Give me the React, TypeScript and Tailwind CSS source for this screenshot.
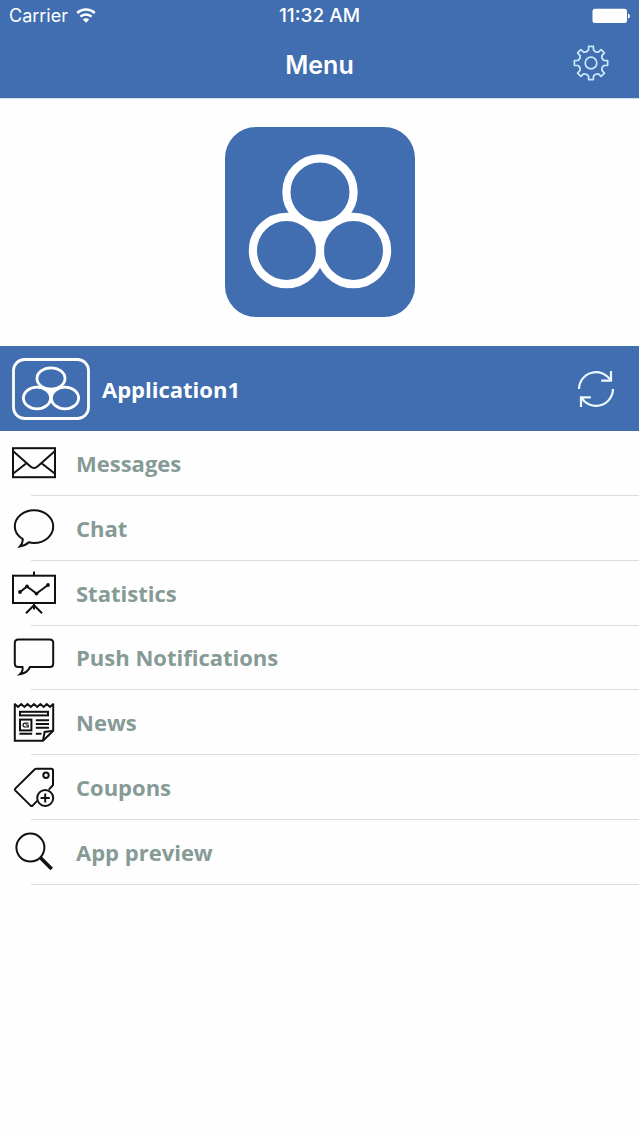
import type { ReactNode } from "react";

// Outline of an eight-toothed gear centred on 18,18
function gearPath() {
  const point = (radius: number, degrees: number) => {
    const angle = (degrees * Math.PI) / 180;
    return `${(18 + radius * Math.sin(angle)).toFixed(2)} ${(18 - radius * Math.cos(angle)).toFixed(2)}`;
  };
  let d = "";
  for (let a = 0; a < 360; a += 45) {
    d += `${a === 0 ? "M" : "L"}${point(13.2, a - 11)} L${point(16.8, a - 8)} L${point(16.8, a + 8)} L${point(13.2, a + 11)} `;
    d += `Q${point(11.2, a + 22.5)} ${point(13.2, a + 34)} `;
  }
  return d + "Z";
}

function GearIcon() {
  return (
    <svg viewBox="0 0 36 36" className="size-9" fill="none" stroke="#c9e8fb" strokeWidth="1.7" strokeLinejoin="round">
      <path d={gearPath()} />
      <circle cx="18" cy="18" r="5.8" />
    </svg>
  );
}

function WifiIcon() {
  return (
    <svg viewBox="0 0 20 16" className="h-4 w-5" fill="none" stroke="white" strokeWidth="2.5">
      <path d="M1.2 5A13 13 0 0 1 18.8 5" />
      <path d="M4.4 8.6A8.2 8.2 0 0 1 15.6 8.6" />
      <path d="M6.8 11.6A4.5 4.5 0 0 1 13.2 11.6L10 14.8Z" fill="white" stroke="none" />
    </svg>
  );
}

function BatteryIcon() {
  return (
    <svg viewBox="0 0 38 16" className="h-4 w-[38px]" fill="white">
      <rect x="0.5" y="0.8" width="34.5" height="14.2" rx="2.5" />
      <path d="M36 5.5Q38 6 38 8T36 10.5Z" />
    </svg>
  );
}

function Logo() {
  return (
    <svg viewBox="0 0 190 190" className="size-[190px]" role="img" aria-label="Logo">
      <rect width="190" height="190" rx="31" fill="#406eb0" />
      <path d="M95 65L61.5 123.5H128.5Z" fill="white" />
      <g fill="#406eb0">
        <circle cx="95" cy="65" r="33.6" />
        <circle cx="61.5" cy="123.5" r="33.6" />
        <circle cx="128.5" cy="123.5" r="33.6" />
      </g>
      <g fill="none" stroke="white" strokeWidth="8.2">
        <circle cx="95" cy="65" r="33.6" />
        <circle cx="61.5" cy="123.5" r="33.6" />
        <circle cx="128.5" cy="123.5" r="33.6" />
      </g>
    </svg>
  );
}

function AppBadge() {
  return (
    <svg viewBox="0 0 78 62" className="h-[62px] w-[78px]" fill="none" stroke="white">
      <rect x="1.5" y="1.5" width="75" height="59" rx="11" strokeWidth="2.8" />
      <path d="M39 28L34 31L39 39L44 31Z" fill="white" stroke="none" />
      <g fill="#406eb0" strokeWidth="2.8">
        <ellipse cx="39" cy="20.5" rx="14" ry="10.7" />
        <ellipse cx="25" cy="40" rx="13.6" ry="10.9" />
        <ellipse cx="53" cy="40" rx="13.6" ry="10.9" />
      </g>
    </svg>
  );
}

function RefreshIcon() {
  return (
    <svg viewBox="0 0 40 40" className="size-10" fill="none" stroke="#eefaff" strokeWidth="2.2">
      <path d="M3 20A17 17 0 0 1 34.8 11.8" />
      <path d="M35 2V11.6H25.2" />
      <path d="M37 20A17 17 0 0 1 5.2 28.2" />
      <path d="M5 38V28.4H14.8" />
    </svg>
  );
}

function MenuIcon({ children }: { children: ReactNode }) {
  return (
    <svg
      viewBox="0 0 48 48"
      className="size-12"
      fill="none"
      stroke="#111"
      strokeWidth="2"
      aria-hidden="true"
    >
      {children}
    </svg>
  );
}

const items = [
  {
    label: "Messages",
    icon: (
      <>
        <rect x="3" y="9.2" width="42" height="29" />
        <path d="M3 12L20.5 27.5Q24 30.5 27.5 27.5L45 12M3 34.8L16.4 24.2M45 34.8L31.6 24.2" />
      </>
    ),
  },
  {
    label: "Chat",
    icon: (
      <path d="M12.8 35.2C7.8 32.2 4.8 27.6 4.8 22.6C4.8 13.4 13.4 6.2 24 6.2S43.2 13.4 43.2 22.6S34.6 39 24 39C22 39 20.4 38.8 18.8 38.3C16.2 40.8 13.4 42 9.8 42.4C11.8 40.4 12.8 38 12.8 35.2Z" />
    ),
  },
  {
    label: "Statistics",
    icon: (
      <>
        <rect x="3" y="6.7" width="42" height="27.3" />
        <path d="M24 2.5V6.7M24 34V40.5M16 44.2L24 36.2L32 44.2" />
        <path d="M10 23L17 17.4L26.5 24.6L38 16" />
        <g fill="#111" stroke="none">
          <circle cx="10" cy="23" r="1.9" />
          <circle cx="17" cy="17.4" r="1.9" />
          <circle cx="26.5" cy="24.6" r="1.9" />
          <circle cx="38" cy="16" r="1.9" />
        </g>
      </>
    ),
  },
  {
    label: "Push Notifications",
    icon: (
      <path d="M12.5 34H8.3Q4.8 34 4.8 30.5V10Q4.8 6.5 8.3 6.5H39.7Q43.2 6.5 43.2 10V30.5Q43.2 34 39.7 34H20Q17.4 40 10 41.2Q13.4 38 12.5 34Z" />
    ),
  },
  {
    label: "News",
    icon: (
      <>
        <path d="M4.8 5.5V42.8H33L43.2 32.8V5.5" />
        <path d="M4.8 6L8 9L11.2 6L14.4 9L17.6 6L20.8 9L24 6L27.2 9L30.4 6L33.6 9L36.8 6L40 9L43.2 6" />
        <path d="M33 42.8L34.6 34L43.2 32.8" />
        <rect x="10" y="13.8" width="28" height="3.6" />
        <rect x="10" y="21.6" width="11.4" height="10.8" />
        <path d="M25.8 22.2H39M25.8 26H39M25.8 29.8H39M9.4 35.8H22.2M25.8 35.8H31.5" />
        <path d="M18.4 25.2H15.2Q13 25.4 13 27.2T15.2 29H18.2V27H15.5" strokeWidth="1.2" />
      </>
    ),
  },
  {
    label: "Coupons",
    icon: (
      <>
        <path
          d="M27.5 37.6L22.6 42.6Q21.6 43.4 20.6 42.6L5.2 27.4Q4.4 26.4 5.2 25.6L24.8 6.3Q25.4 5.8 26.2 5.8H41.2Q43 5.8 43 7.6V21.4Q43 22.2 42.4 22.8L38.8 26.6"
        />
        <circle cx="36" cy="12.3" r="2.7" />
        <circle cx="35.2" cy="35" r="8" />
        <path d="M35.2 30.4V39.6M30.6 35H39.8" />
      </>
    ),
  },
  {
    label: "App preview",
    icon: (
      <>
        <circle cx="20.4" cy="19.6" r="14" />
        <path d="M30.5 29.7L41.7 40.9" strokeWidth="3.6" />
      </>
    ),
  },
];

export default function App() {
  return (
    <div className="min-h-screen bg-[#fefefe] font-['Open_Sans',sans-serif]">
      {/* Status bar and title */}
      <header className="border-b border-[#d5dbe7] bg-[#406eb0] font-['Inter',sans-serif] text-white">
        <div className="grid h-8 grid-cols-3 items-center px-[9px] text-lg leading-8">
          <div className="flex items-center gap-2">
            <span>Carrier</span>
            <WifiIcon />
          </div>
          <span className="text-center text-[19px] font-medium">11:32 AM</span>
          <div className="flex justify-end">
            <BatteryIcon />
          </div>
        </div>
        <div className="grid h-[66px] grid-cols-3 items-center px-[30px]">
          <h1 className="col-start-2 text-center text-[25px] font-semibold leading-8">Menu</h1>
          <button type="button" aria-label="Settings" className="justify-self-end pb-1">
            <GearIcon />
          </button>
        </div>
      </header>

      <div className="flex justify-center pt-7 pb-[29px]">
        <Logo />
      </div>

      {/* Selected application */}
      <section className="flex h-[85px] items-center gap-3 bg-[#406eb0] pr-[23px] pl-3 text-white">
        <AppBadge />
        <h2 className="flex-1 text-[22px] font-bold leading-[30px]">Application1</h2>
        <button type="button" aria-label="Refresh">
          <RefreshIcon />
        </button>
      </section>

      <nav>
        <ul className="grid min-h-[454px] auto-rows-fr">
          {items.map((item) => (
            <li key={item.label} className="flex flex-col">
              <a href="#" className="flex flex-1 items-center gap-[18px] pl-[10px]">
                <MenuIcon>{item.icon}</MenuIcon>
                <span className="text-[22px] font-bold leading-[30px] text-[#869a96]">{item.label}</span>
              </a>
              <div className="ml-[31px] h-px bg-[#dcdcde]" />
            </li>
          ))}
        </ul>
      </nav>
    </div>
  );
}
